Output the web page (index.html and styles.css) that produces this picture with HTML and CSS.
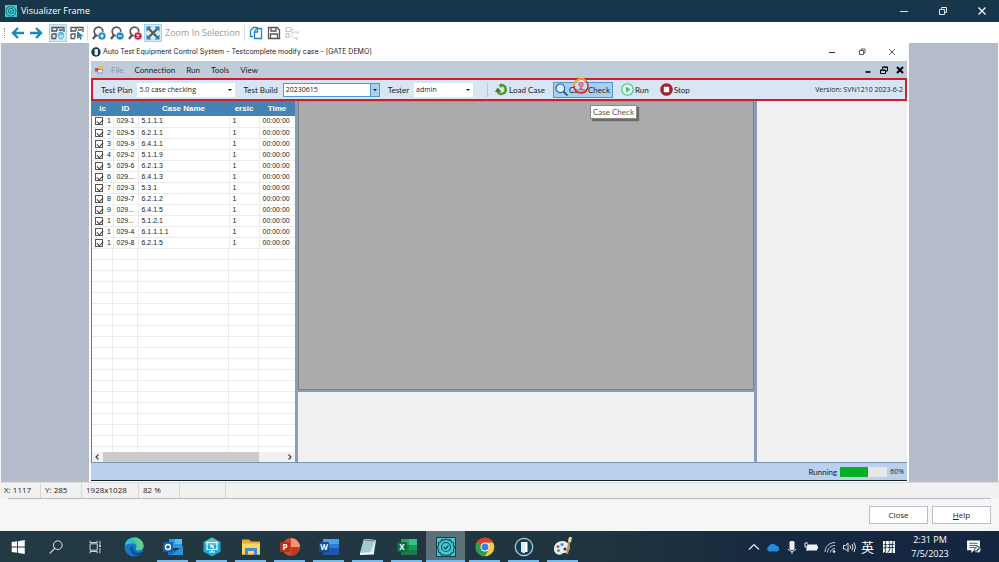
FILE: index.html
```html
<!DOCTYPE html>
<html lang="en">
<head>
<meta charset="utf-8">
<title>Visualizer Frame</title>
<link rel="stylesheet" href="styles.css">
</head>
<body>
<svg class="defs" width="0" height="0" aria-hidden="true">
  <symbol id="badge" viewBox="0 0 16 16"><rect width="16" height="16" fill="#43c9d4"/><path d="M8 1.5l1.6 1 1.9-.2.9 1.7 1.7.9-.2 1.9 1 1.6-1 1.6.2 1.9-1.7.9-.9 1.7-1.9-.2-1.6 1-1.6-1-1.9.2-.9-1.7-1.7-.9.2-1.9-1-1.600 1-1.600-.2-1.900 1.700-.900.900-1.700 1.900.200z" fill="none" stroke="#0f4c56" stroke-width=".9"/><circle cx="8" cy="8" r="3.600" fill="none" stroke="#0f4c56" stroke-width=".9"/><path d="M6.300 8l1.400 1.400 2.300-2.600" fill="none" stroke="#0f4c56" stroke-width="1"/></symbol>
  <symbol id="lens" viewBox="0 0 14 14"><circle cx="6.500" cy="5.500" r="4.300" fill="none" stroke="#555" stroke-width="1.700"/><path d="M4 9L1 13" stroke="#555" stroke-width="2.200"/></symbol>
  <symbol id="door" viewBox="0 0 16 16"><circle cx="8" cy="8" r="7.500" fill="#123a4c"/><path d="M6 3.500h5v9H6z" fill="#fff"/><path d="M6 3.500l3 1v9l-3-1z" fill="#dff3fa"/></symbol>
</svg>

<header class="titlebar">
  <svg class="app-icon"><use href="#badge"/></svg>
  <span class="app-title">Visualizer Frame</span>
  <button class="win" aria-label="Minimize"><svg viewBox="0 0 10 10"><path d="M1 5.500h8" stroke="#cfe0e6"/></svg></button>
  <button class="win" aria-label="Restore"><svg viewBox="0 0 10 10" fill="none" stroke="#dfe8ec"><path d="M1.500 3.500h5v5h-5zM3.500 3V1.500h5v5H7"/></svg></button>
  <button class="win" aria-label="Close window"><svg viewBox="0 0 10 10"><path d="M1.500 1.500l7 7M8.500 1.500l-7 7" stroke="#fff" stroke-width="1.200"/></svg></button>
</header>

<nav class="tools" aria-label="Frame tools">
  <span class="grip"></span>
  <button class="tool" aria-label="Back"><svg viewBox="0 0 14 14"><path d="M13 7H2.500M7 2L2 7l5 5" fill="none" stroke="#1e86bd" stroke-width="2.400"/></svg></button>
  <button class="tool gap" aria-label="Forward"><svg viewBox="0 0 14 14"><path d="M1 7h10.500M7 2l5 5-5 5" fill="none" stroke="#1e86bd" stroke-width="2.400"/></svg></button>
  <button class="tool on" aria-label="Pan"><svg viewBox="0 0 14 14" fill="none"><path d="M1 6V1.500h12V6M1 5h5M6 1.500V5M8 4h4M1 8v4.500h4M1 8h4v4" stroke="#555" stroke-width="1.300"/><path d="M6.500 8.500l1.500 1V6.500h1v2V6h1.200v2.500V6.500h1.200v2.200V7.500h1v3.500l-1.400 2H9z" fill="#b8def2" stroke="#4aa6d6" stroke-width=".8"/></svg></button>
  <button class="tool" aria-label="Pick object"><svg viewBox="0 0 14 14" fill="none"><path d="M1 6V1.500h12V6M1 5h5M6 1.500V5M8 4h4M1 8v4.500h4M1 8h4v4" stroke="#555" stroke-width="1.300"/><path d="M7 5l6.500 5-2.800.500 1.300 2.500-1.500.700-1.200-2.500L7 13z" fill="#1e86bd"/></svg></button>
  <span class="rule"></span>
  <button class="tool" aria-label="Zoom in"><svg viewBox="0 0 14 14"><use href="#lens"/><circle cx="10" cy="10" r="4" fill="#1e86bd" stroke="#fff" stroke-width=".6"/><path d="M8 10h4M10 8v4" stroke="#fff" stroke-width="1.200"/></svg></button>
  <button class="tool" aria-label="Zoom out"><svg viewBox="0 0 14 14"><use href="#lens"/><circle cx="10" cy="10" r="4" fill="#1e86bd" stroke="#fff" stroke-width=".6"/><path d="M8 10h4" stroke="#fff" stroke-width="1.200"/></svg></button>
  <button class="tool" aria-label="Reset zoom"><svg viewBox="0 0 14 14"><use href="#lens"/><circle cx="10" cy="10" r="4" fill="#c4122f" stroke="#fff" stroke-width=".6"/><path d="M8.500 8.500l3 3M11.500 8.500l-3 3" stroke="#fff" stroke-width="1.200"/></svg></button>
  <button class="tool on" aria-label="Fit to window"><svg viewBox="0 0 14 14"><path d="M2.500 2.500l9 9M11.500 2.500l-9 9" stroke="#555" stroke-width="2"/><path d="M.5.500h5l-5 5zM13.500.500v5l-5-5zM.5 13.500v-5l5 5zM13.500 13.500h-5l5-5z" fill="#1e86bd"/></svg></button>
  <button class="zoomsel" disabled>Zoom In Selection</button>
  <span class="rule"></span>
  <button class="tool" aria-label="Copy"><svg viewBox="0 0 14 14" fill="#fff" stroke-width="1.300"><path d="M4 10.500H1.500v-6l3-3H8V4" stroke="#1e86bd"/><path d="M5.500 12.500v-7l2.500-3h4.500v10z" stroke="#1e86bd"/><path d="M8.500 2.500V6h-3" stroke="#1e86bd"/></svg></button>
  <button class="tool" aria-label="Save"><svg viewBox="0 0 14 14" fill="none" stroke="#555" stroke-width="1.300"><path d="M1.500 1.500h8.500l2.500 2.500v8.500h-11zM4 2v3h5V2M3.500 12V8h7v4"/></svg></button>
  <button class="tool" aria-label="Update" disabled><svg viewBox="0 0 14 14" fill="none" stroke="#c9c9c9" stroke-width="1.200"><path d="M1 1.500h5v4H1zM6 3.500h3M1 7.500h3v4H1zM8 6h5v2M13 12H8M7.500 10h-2M8 6L6.500 8M13 12l-2 1.500"/></svg></button>
</nav>

<main class="canvas">
  <section class="shot" aria-label="Auto Test Equipment Control System">
    <div class="shot-title">
      <svg class="small-icon"><use href="#door"/></svg>
      <span class="grow">Auto Test Equipment Control System - Testcomplete modify case - [GATE DEMO]</span>
      <button class="win-s" aria-label="Minimize application"><svg viewBox="0 0 8 8"><path d="M1 4.500h6" stroke="#333"/></svg></button>
      <button class="win-s" aria-label="Restore application"><svg viewBox="0 0 8 8" fill="none" stroke="#333" stroke-width=".8"><path d="M1.500 2.500h4v4h-4zM3 2V1h4v4H6"/></svg></button>
      <button class="win-s" aria-label="Close application"><svg viewBox="0 0 8 8"><path d="M1 1l6 6M7 1L1 7" stroke="#333" stroke-width=".8"/></svg></button>
    </div>
    <div class="frame">
      <nav class="menu" aria-label="Application menu">
        <svg class="form-icon" viewBox="0 0 9 9"><rect x="0" y="3" width="3.500" height="3.500" fill="#d04a35"/><rect x="4" y="1" width="4.500" height="4.500" fill="#f0c03c"/><rect x="3" y="4.500" width="4.500" height="3.500" fill="#eef3fb" stroke="#557fc0" stroke-width=".7"/></svg>
        <button class="dim">File</button><button>Connection</button><button>Run</button><button>Tools</button><button>View</button>
        <span class="grow"></span>
        <button class="mdi" aria-label="Minimize document"><svg viewBox="0 0 8 8"><path d="M1.500 6h5" stroke="#000" stroke-width="1.600"/></svg></button>
        <button class="mdi" aria-label="Restore document"><svg viewBox="0 0 8 8" fill="none" stroke="#000"><path d="M.5 4h5v3.500h-5zM2.500 3V1h5v4H6M.5 4.300h5M2.500 1.300h5"/></svg></button>
        <button class="mdi" aria-label="Close document"><svg viewBox="0 0 8 8"><path d="M1 1l6 6M7 1L1 7" stroke="#000" stroke-width="2"/></svg></button>
      </nav>
      <div class="bar">
        <label for="plan">Test Plan</label>
        <span class="combo plan"><select id="plan"><option>5.0 case checking</option></select></span>
        <label for="build">Test Build</label>
        <span class="combo build"><select id="build"><option>20230615</option></select></span>
        <label for="tester">Tester</label>
        <span class="combo tester"><select id="tester"><option>admin</option></select></span>
        <span class="sep"></span>
        <button class="cmd"><svg viewBox="0 0 13 13"><path d="M6 2.300a4.300 4.300 0 1 1-3.500 6" fill="none" stroke="#4c9a2a" stroke-width="2.400"/><path d="M0 9l2.500-4.500L6.500 8.500z" fill="#3f7f22"/><path d="M6.500 0L3.500 2.500l3 2.700z" fill="#4c9a2a"/></svg>Load Case</button>
        <button class="cmd check"><svg viewBox="0 0 13 13"><circle cx="5.300" cy="5.300" r="4.300" fill="#e4f2fc" stroke="#235e9c" stroke-width="1.200"/><path d="M8.500 8.500l4 4" stroke="#235e9c" stroke-width="1.900"/></svg>Case Check
          <svg class="pointer" viewBox="0 0 18 18"><circle cx="9" cy="9" r="7" fill="#fff8e0" fill-opacity=".4" stroke="#d9222a" stroke-width="1.500"/><path d="M2 9a7 7 0 0 1 12-5" fill="none" stroke="#e8b820" stroke-width="1.500"/><circle cx="9" cy="7.500" r="2.200" fill="#f08a96" stroke="#cc4455" stroke-width=".7"/><path d="M6 13l3-3.500 3 3.500z" fill="#d9667a"/></svg>
          <span class="tip" role="tooltip">Case Check</span>
        </button>
        <button class="cmd run"><svg viewBox="0 0 13 13"><circle cx="6.500" cy="6.500" r="5.700" fill="#effaf4" stroke="#35c47c" stroke-width="1.100"/><path d="M5 3.500l4.500 3L5 9.500z" fill="#35c47c"/></svg>Run</button>
        <button class="cmd"><svg viewBox="0 0 13 13"><circle cx="6.500" cy="6.500" r="6.300" fill="#a3242e"/><rect x="3.800" y="3.800" width="5.400" height="5.400" rx=".6" fill="#fff"/></svg>Stop</button>
        <span class="grow"></span>
        <span class="version">Version: SVN1210 2023-6-2</span>
      </div>
      <div class="work">
        <div class="cases">
          <table>
            <colgroup><col class="c-no"><col class="c-id"><col class="c-name"><col class="c-ver"><col class="c-time"></colgroup>
            <thead><tr><th>lc</th><th>ID</th><th>Case Name</th><th>ersic</th><th>Time</th></tr></thead>
            <tbody>
              <tr><td><label><input type="checkbox" checked>1</label></td><td>029-1</td><td>5.1.1.1</td><td>1</td><td>00:00:00</td></tr>
              <tr><td><label><input type="checkbox" checked>2</label></td><td>029-5</td><td>6.2.1.1</td><td>1</td><td>00:00:00</td></tr>
              <tr><td><label><input type="checkbox" checked>3</label></td><td>029-9</td><td>6.4.1.1</td><td>1</td><td>00:00:00</td></tr>
              <tr><td><label><input type="checkbox" checked>4</label></td><td>029-2</td><td>5.1.1.9</td><td>1</td><td>00:00:00</td></tr>
              <tr><td><label><input type="checkbox" checked>5</label></td><td>029-6</td><td>6.2.1.3</td><td>1</td><td>00:00:00</td></tr>
              <tr><td><label><input type="checkbox" checked>6</label></td><td>029...</td><td>6.4.1.3</td><td>1</td><td>00:00:00</td></tr>
              <tr><td><label><input type="checkbox" checked>7</label></td><td>029-3</td><td>5.3.1</td><td>1</td><td>00:00:00</td></tr>
              <tr><td><label><input type="checkbox" checked>8</label></td><td>029-7</td><td>6.2.1.2</td><td>1</td><td>00:00:00</td></tr>
              <tr><td><label><input type="checkbox" checked>9</label></td><td>029...</td><td>6.4.1.5</td><td>1</td><td>00:00:00</td></tr>
              <tr><td><label><input type="checkbox" checked>1</label></td><td>029...</td><td>5.1.2.1</td><td>1</td><td>00:00:00</td></tr>
              <tr><td><label><input type="checkbox" checked>1</label></td><td>029-4</td><td>6.1.1.1.1</td><td>1</td><td>00:00:00</td></tr>
              <tr><td><label><input type="checkbox" checked>1</label></td><td>029-8</td><td>6.2.1.5</td><td>1</td><td>00:00:00</td></tr>
            </tbody>
          </table>
          <div class="empty"></div>
          <div class="hscroll">
            <svg viewBox="0 0 6 8"><path d="M4.500 1.500L2 4l2.500 2.500" fill="none" stroke="#444" stroke-width="1.200"/></svg>
            <span class="track"><span class="thumb"></span></span>
            <svg viewBox="0 0 6 8"><path d="M1.500 1.500L4 4 1.500 6.500" fill="none" stroke="#444" stroke-width="1.200"/></svg>
          </div>
        </div>
        <div class="middle"><div class="mdi-area"></div><div class="log"></div></div>
        <div class="side"></div>
      </div>
      <div class="runbar"><span id="run-label">Running</span><span class="progress" role="progressbar" aria-labelledby="run-label" aria-valuenow="60"><span class="done"></span></span><span class="percent">60%</span></div>
    </div>
  </section>
</main>

<div class="status"><span class="s1">X: 1117</span><span class="s2">Y: 285</span><span class="s3">1928x1028</span><span class="s4">82 %</span><span class="s5"></span></div>
<footer class="actions"><button>Close</button><button><u>H</u>elp</button></footer>

<nav class="taskbar" aria-label="Taskbar">
  <button class="task" aria-label="Start"><svg viewBox="0 0 20 20"><path d="M3 4.500l6-.900V9.500H3zM10 3.500l7.500-1.200V9.500H10zM3 10.500h6v6L3 15.500zM10 10.500h7.500v7.300L10 16.600z" fill="#fff"/></svg></button>
  <button class="task" aria-label="Search"><svg viewBox="0 0 20 20"><circle cx="12" cy="8" r="4.800" fill="none" stroke="#e4eaec" stroke-width="1.100"/><path d="M8.700 11.500L3 17" stroke="#e4eaec" stroke-width="1.200"/></svg></button>
  <button class="task" aria-label="Task view"><svg viewBox="0 0 20 20" fill="none" stroke="#dfe6e8"><path d="M4.500 6.500h8v7h-8zM4.500 3v2h8V3M4.500 17v-2h8v2M15.500 3v5M15.500 11v6"/><path d="M15.500 8v2" stroke-width="2"/></svg></button>
  <button class="task" aria-label="Edge"><svg viewBox="0 0 20 20"><circle cx="10" cy="10" r="9.500" fill="#1878c8"/><path d="M.7 8.500C2 2 7 .300 11 .600c5.500.500 9 5 8.500 9-.4 3-3.500 4-6 3.600-1.500-.200-2-1-1.300-2 1.500-3-1-5-4.200-4.800-3.500 0-6 1.500-7.300 2.100z" fill="#35c0c8"/><path d="M11 .600c5.500.500 9 5 8.500 9-.4 3-3.500 4-6 3.600-1.500-.200-2-1-1.300-2C14.500 6 12 3 8 2z" fill="#5fd07c"/><path d="M7.500 9c-3 4 0 9.500 6 9.500 2-.500 4-2 5-4-4 2.500-10 1-9.500-3.500z" fill="#0c4d9c"/></svg></button>
  <button class="task open" aria-label="Outlook"><svg viewBox="0 0 20 20"><path d="M6 2h13v9H6z" fill="#2b9be0"/><path d="M12 2h7v5h-7z" fill="#59bdf0"/><path d="M5 9l7 5 8-5v9H5z" fill="#1473c4"/><path d="M20 9v9H8z" fill="#2a91dc"/><rect x="0" y="5" width="10" height="10" rx="1" fill="#1260b2"/><circle cx="5" cy="10" r="2.500" fill="none" stroke="#fff" stroke-width="1.400"/></svg></button>
  <button class="task open" aria-label="Remote console"><svg viewBox="0 0 20 20"><path d="M10 .5l8.500 4.700v9.600L10 19.500l-8.500-4.700V5.200z" fill="#22a7cf"/><path d="M10 .5l8.500 4.700L10 10 1.500 5.200z" fill="#48c4de"/><path d="M5 5.500h10v7H5zM7 15h6M10 12v3" fill="none" stroke="#fff" stroke-width="1.200"/><path d="M8.500 7v4l1.200-1 1.500 2 1-.700-1.300-1.800 1.500-.300z" fill="#fff"/></svg></button>
  <button class="task open" aria-label="File Explorer"><svg viewBox="0 0 20 20"><path d="M1 2.500h7l2 2h9v13H1z" fill="#e9ab2e"/><path d="M1 6.500h18v11H1z" fill="#fbd667"/><path d="M4 18v-7h12v7h-3v-4H7v4z" fill="#3c8fd0"/></svg></button>
  <button class="task open" aria-label="PowerPoint"><svg viewBox="0 0 20 20"><circle cx="11" cy="10" r="9" fill="#d3492c"/><path d="M11 1a9 9 0 0 1 9 9h-9z" fill="#f59375"/><path d="M20 10a9 9 0 0 1-9 9v-9z" fill="#c03a20"/><rect y="5" width="10" height="10" rx="1" fill="#b83218"/><text x="5" y="13" class="glyph">P</text></svg></button>
  <button class="task open" aria-label="Word"><svg viewBox="0 0 20 20"><rect x="4" y="2" width="16" height="16" rx="1" fill="#1f57ac"/><path d="M4 2h16v5H4z" fill="#46a4ea"/><path d="M4 7h16v4H4z" fill="#2b7cd3"/><rect y="5" width="10" height="10" rx="1" fill="#17489c"/><text x="5" y="13" class="glyph">W</text></svg></button>
  <button class="task open" aria-label="Notepad"><svg viewBox="0 0 20 20"><path d="M6 2l12 1-2 13-14 1z" fill="#d5e8ec"/><path d="M6 2l11 1-5 12.500L2 16z" fill="#9fcbd5"/><path d="M2 16l14-1v2.500L2 18z" fill="#f4f7f7"/><path d="M6 3l11 1" stroke="#68858c"/></svg></button>
  <button class="task open" aria-label="Excel"><svg viewBox="0 0 20 20"><rect x="4" y="2" width="16" height="16" rx="1" fill="#1b7a45"/><path d="M4 2h8v6H4z" fill="#26a566"/><path d="M12 2h8v6h-8z" fill="#36c481"/><path d="M12 8h8v5h-8z" fill="#149b58"/><rect y="5" width="10" height="10" rx="1" fill="#0f6c3a"/><text x="5" y="13" class="glyph">X</text></svg></button>
  <button class="task open active" aria-label="Visualizer"><svg viewBox="0 0 20 20"><use href="#badge" x="0" y="0" width="20" height="20"/><rect x=".5" y=".5" width="19" height="19" fill="none" stroke="#153f49"/></svg></button>
  <button class="task open" aria-label="Chrome"><svg viewBox="0 0 20 20"><circle cx="10" cy="10" r="9.300" fill="#fcc934"/><path d="M10 10L1.900 5.400A9.300 9.300 0 0 1 18.100 5.400H10z" fill="#e33b2e"/><path d="M10 10L1.900 5.400A9.300 9.300 0 0 0 10 19.300l4-7z" fill="#2a9e4b"/><circle cx="10" cy="10" r="4.500" fill="#fff"/><circle cx="10" cy="10" r="3.500" fill="#3c7fe8"/></svg></button>
  <button class="task open" aria-label="Auto Test"><svg viewBox="0 0 20 20"><circle cx="10" cy="10" r="8.700" fill="#173e50" stroke="#a9d3df" stroke-width="1.200"/><path d="M7 5h6.500v10H7z" fill="#fff"/><path d="M7 5l4 1.500V16.500L7 15z" fill="#d7edf3"/></svg></button>
  <button class="task open" aria-label="Paint"><svg viewBox="0 0 20 20"><path d="M1 12C1 6 7 3 12 4.500c5 1.500 6 7 3 10-2 2.500-5 .500-6 2.500-1 1.500-8 1-8-5z" fill="#e6edf2"/><circle cx="5" cy="9.500" r="1.500" fill="#d84a3a"/><circle cx="9" cy="7.500" r="1.500" fill="#3c8fd8"/><circle cx="5.500" cy="13.500" r="1.500" fill="#4aa84c"/><circle cx="12" cy="12" r="1.500" fill="#243840"/><path d="M17 1l-3 16" stroke="#c58a48" stroke-width="2"/><path d="M17.500 0l-1 5" stroke="#f2d7a0" stroke-width="3"/></svg></button>
  <span class="grow"></span>
  <div class="tray">
    <svg viewBox="0 0 14 14"><path d="M2 9.500L7 4.500l5 5" fill="none" stroke="#e8edf0" stroke-width="1.200"/></svg>
    <svg viewBox="0 0 14 14"><path d="M3 11.500a3 3 0 0 1 0-5.500 4 4 0 0 1 7-.500 3.200 3.200 0 0 1 1.500 6z" fill="#1c90e0"/></svg>
    <svg viewBox="0 0 14 14"><rect x="4.500" y="1" width="5" height="9" rx="1.500" fill="#f2f2f2"/><path d="M3 9c1 3 7 3 8 0M7 11v3" fill="none" stroke="#ddd"/></svg>
    <svg viewBox="0 0 14 14"><rect x="3" y="4.500" width="10" height="6" fill="#eef2f4"/><path d="M13.500 6v3M1 3v4h4M1 3h3M3 7v4" stroke="#eef2f4" fill="none"/></svg>
    <svg viewBox="0 0 14 14" fill="none" stroke="#c5ced6"><path d="M2 12C2 6.500 6.500 2.500 12 2.500M4.500 12.500c0-4 3.500-7 7.500-7M7.500 12.500c0-2.500 2-4 4.500-4"/><circle cx="11" cy="11.500" r="1" fill="#fff"/></svg>
    <svg viewBox="0 0 14 14" fill="none" stroke="#e2e8ec"><path d="M1.500 5.500H3.500L6 3v8.500L3.500 9h-2zM8 5.500q1.200 1.700 0 3.500M10 4q2 3.200 0 6.500M12 2.500q3 4.500 0 9.500"/></svg>
    <span class="ime" lang="zh">英</span>
    <span class="ime pin" lang="zh">拼</span>
  </div>
  <time class="clock"><span>2:31 PM</span><span>7/5/2023</span></time>
  <button class="notes" aria-label="Notifications"><svg viewBox="0 0 14 14"><path d="M1 1.500h12v9H7.500L5 13v-2.500H1z" fill="#fff"/><path d="M3 4h8M3 6h8M3 8h5" stroke="#33495e" stroke-width=".8"/><circle cx="11" cy="10" r="3" fill="#dfe6ea" stroke="#1c344b" stroke-width=".8"/><path d="M9.500 11.500l3-3" stroke="#1c344b"/></svg></button>
</nav>
</body>
</html>
```
FILE: styles.css
```css
* { box-sizing: border-box; }
html, body { height: 100%; }
body {
  margin: 0;
  min-height: 100vh;
  display: flex;
  flex-direction: column;
  background: #f4f6f8;
  color: #1b1b1b;
  font: 8px/12px "Open Sans", "Noto Sans", sans-serif;
}
button, select, input { font: inherit; color: inherit; margin: 0; }
button { border: 0; padding: 0; background: none; white-space: nowrap; }
svg { display: block; flex: none; }
.defs { position: absolute; }
.grow { flex: 1; }

/* Window title */
.titlebar { flex: none; height: 22px; display: flex; align-items: center; background: #173649; color: #fff; padding-left: 5px; font-size: 9px; }
.app-icon { width: 12px; height: 12px; margin-right: 4px; }
.app-title { flex: 1; }
.win { width: 39px; height: 22px; display: grid; place-items: center; }
.win svg { width: 10px; height: 10px; }
.win:last-child { margin-right: -2px; }

/* Frame tools */
.tools { flex: none; height: 21px; display: flex; align-items: center; gap: 1px; padding-left: 4px; background: #fff; }
.grip { width: 1px; height: 10px; margin-right: 3px; border-left: 1px dotted #999; }
.tool { width: 17px; height: 18px; display: grid; place-items: center; }
.tool svg { width: 14px; height: 14px; }
.tool.gap { margin-right: 4px; }
.tool.on { background: #d3eaf7; border: 1px solid #a5d3ec; width: 18px; }
.rule { width: 1px; height: 16px; margin: 0 1px; background: #ddd; }
.zoomsel { color: #9b9b9b; font-size: 9px; padding: 0 2px; }

/* Captured screen */
.canvas { flex: 1; min-height: 0; display: grid; grid-template-columns: 88fr 820fr 89fr; margin: 0 1px; background: #b4bbcb; }
.shot { grid-column: 2; display: flex; flex-direction: column; background: #fff; padding: 0 2px 1px; font: 8px/10px Lato, "Open Sans", sans-serif; min-width: 0; }
.shot-title { flex: none; height: 18px; display: flex; align-items: center; font: 7px/10px Inter, "Open Sans", sans-serif; }
.combo, .version, .percent { font: 7px/10px "Open Sans", "Noto Sans", sans-serif; }
.small-icon { width: 10px; height: 10px; margin: 0 2px 0 0; }
.win-s { width: 30px; height: 18px; display: grid; place-items: center; }
.win-s svg { width: 8px; height: 8px; }
.frame { flex: 1; min-height: 0; display: flex; flex-direction: column; border-bottom: 1px solid #10212c; }
.menu { flex: none; height: 17px; display: flex; align-items: center; gap: 11px; padding: 0 3px 0 4px; background: #c0ccda; }
.form-icon { width: 9px; height: 9px; margin-right: -4px; }
.dim { color: #8b93a0; }
.mdi { width: 8px; margin-left: -3px; }
.mdi svg { width: 8px; height: 8px; }

.bar { flex: none; height: 23px; display: flex; align-items: center; border: 2px solid #c9202b; background: #dae5f3; padding: 0 2px 0 8px; white-space: nowrap; }
.combo { position: relative; height: 14px; margin: 0 8px 0 5px; background: #fff; }
.combo select { width: 100%; height: 100%; appearance: none; border: 0; padding: 0 2px; background: none; display: block; }
.combo::after { content: ""; position: absolute; right: 3px; top: 6px; border: 2px solid transparent; border-top-color: #111; border-bottom: 0; pointer-events: none; }
.plan { width: 98px; }
.build { width: 97px; border: 1px solid #4f97d8; }
.build::before { content: ""; position: absolute; right: 0; top: 0; bottom: 0; width: 8px; background: #a9cff0; border-left: 1px solid #4f97d8; }
.build::after { right: 2px; top: 5px; }
.tester { width: 59px; }
.sep { width: 1px; height: 14px; background: #b9c6d6; margin: 0 7px 0 6px; }
.cmd { position: relative; display: flex; align-items: center; gap: 1px; height: 16px; margin-right: 8px; }
.cmd > svg:first-child { width: 13px; height: 13px; }
.cmd.check { background: #a9cff0; border: 1px solid #4f97d8; padding: 0 2px 0 1px; }
.cmd.run { margin-right: 11px; }
.pointer { position: absolute; left: 18px; top: -6px; width: 18px; height: 18px; }
.tip { position: absolute; left: 36px; top: 22px; padding: 1px 2px; background: #fff; border: 1px solid #888; box-shadow: 2px 2px 1px #6b6b6b; color: #555; z-index: 2; }

.work { flex: 1; min-height: 0; display: grid; grid-template-columns: 203px 1fr 150px; gap: 3px; background: #8a9db8; border-left: 1px solid #6b7c93; border-bottom: 1px solid #7f92ab; }
.cases { display: flex; flex-direction: column; background: #fff; min-height: 0; }
table { width: 100%; border-collapse: collapse; table-layout: fixed; font: 7px/10px "Liberation Sans", Arial, sans-serif; color: #222; }
.c-no { width: 21px; } .c-id { width: 25px; } .c-name { width: 91px; } .c-ver { width: 30px; }
th { height: 15px; padding: 0; background: #4682b4; color: #fff; font: bold 8px/14px "Liberation Sans", Arial, sans-serif; }
td { height: 11px; padding: 0 0 0 3px; border-right: 1px solid #ececec; border-bottom: 1px solid #ececec; white-space: nowrap; overflow: hidden; }
td:last-child { border-right: 0; }
td label { display: flex; align-items: center; gap: 4px; }
input[type="checkbox"] { appearance: none; position: relative; width: 8px; height: 8px; border: 1px solid #555; background: #fff; }
input[type="checkbox"]:checked::after { content: ""; position: absolute; left: 1px; top: 1px; width: 5px; height: 3px; border: solid #444; border-width: 0 0 1px 1px; transform: rotate(-45deg); }
.empty {
  flex: 1;
  background:
    linear-gradient(#ececec, #ececec) 20px 0 / 1px 100% no-repeat,
    linear-gradient(#ececec, #ececec) 45px 0 / 1px 100% no-repeat,
    linear-gradient(#ececec, #ececec) 136px 0 / 1px 100% no-repeat,
    linear-gradient(#ececec, #ececec) 166px 0 / 1px 100% no-repeat,
    repeating-linear-gradient(#fff 0 10px, #ececec 10px 11px);
}
.hscroll { flex: none; height: 10px; display: flex; align-items: center; padding: 0 2px; background: #f1f1f1; }
.hscroll svg { width: 6px; height: 8px; }
.track { flex: 1; height: 10px; margin: 0 3px; }
.thumb { display: block; width: 86%; height: 100%; background: #cbcbcb; }
.middle { display: grid; grid-template-rows: 290fr 70fr; gap: 2px; }
.mdi-area { background: #ababab; border: 1px solid #7c7f84; border-top-color: #999; }
.log, .side { background: #f0f0f0; }
.runbar { flex: none; height: 17px; display: flex; align-items: center; justify-content: flex-end; gap: 3px; padding-right: 3px; background: #b9d1ee; }
.progress { width: 47px; height: 10px; background: #e6e6e6; }
.done { display: block; width: 60%; height: 100%; background: #06b025; }

/* Status and actions */
.status { flex: none; height: 16px; display: flex; background: #f1f1f1; border-top: 1px solid #ddd; line-height: 14px; }
.status span { border-right: 1px solid #d6d6d6; padding-left: 4px; }
.s1 { width: 41px; } .s2 { width: 41px; } .s3 { width: 57px; } .s4 { width: 41px; } .s5 { width: 46px; }
.actions { flex: none; height: 33px; margin: 0 8px; border-top: 1px solid #bbb; display: flex; justify-content: flex-end; align-items: center; gap: 4px; }
.actions button { width: 59px; height: 18px; background: #fff; border: 1px solid #b9bec9; }

/* Taskbar */
.taskbar { flex: none; height: 31px; display: flex; align-items: stretch; background: linear-gradient(90deg, #223a43, #20343f 60%, #14283f 80%, #14263f); color: #fff; }
.task { width: 39px; display: grid; place-items: center; position: relative; }
.task:first-child { width: 36px; }
.task svg { width: 20px; height: 20px; }
.task:nth-child(-n+3) svg { width: 18px; height: 18px; }
.task.open::after { content: ""; position: absolute; left: 4px; right: 4px; bottom: 0; height: 2px; background: #76b9ed; }
.task.active { background: #5d6f77; }
.task.active::after { left: 0; right: 0; }
.glyph { font: bold 8px "Open Sans", sans-serif; fill: #fff; text-anchor: middle; }
.tray { display: flex; align-items: center; gap: 5px; }
.tray svg { width: 14px; height: 14px; }
.ime { font: 13px/16px "Noto Sans CJK SC", sans-serif; }
.ime.pin { font-size: 12px; line-height: 12px; background: #fff; color: #14263f; margin: 0 10px 0 4px; }
.clock { width: 50px; display: flex; flex-direction: column; justify-content: center; text-align: center; font-size: 9px; line-height: 14px; }
.notes { width: 44px; display: grid; place-items: center; padding-right: 8px; }
.notes svg { width: 15px; height: 15px; }
```
